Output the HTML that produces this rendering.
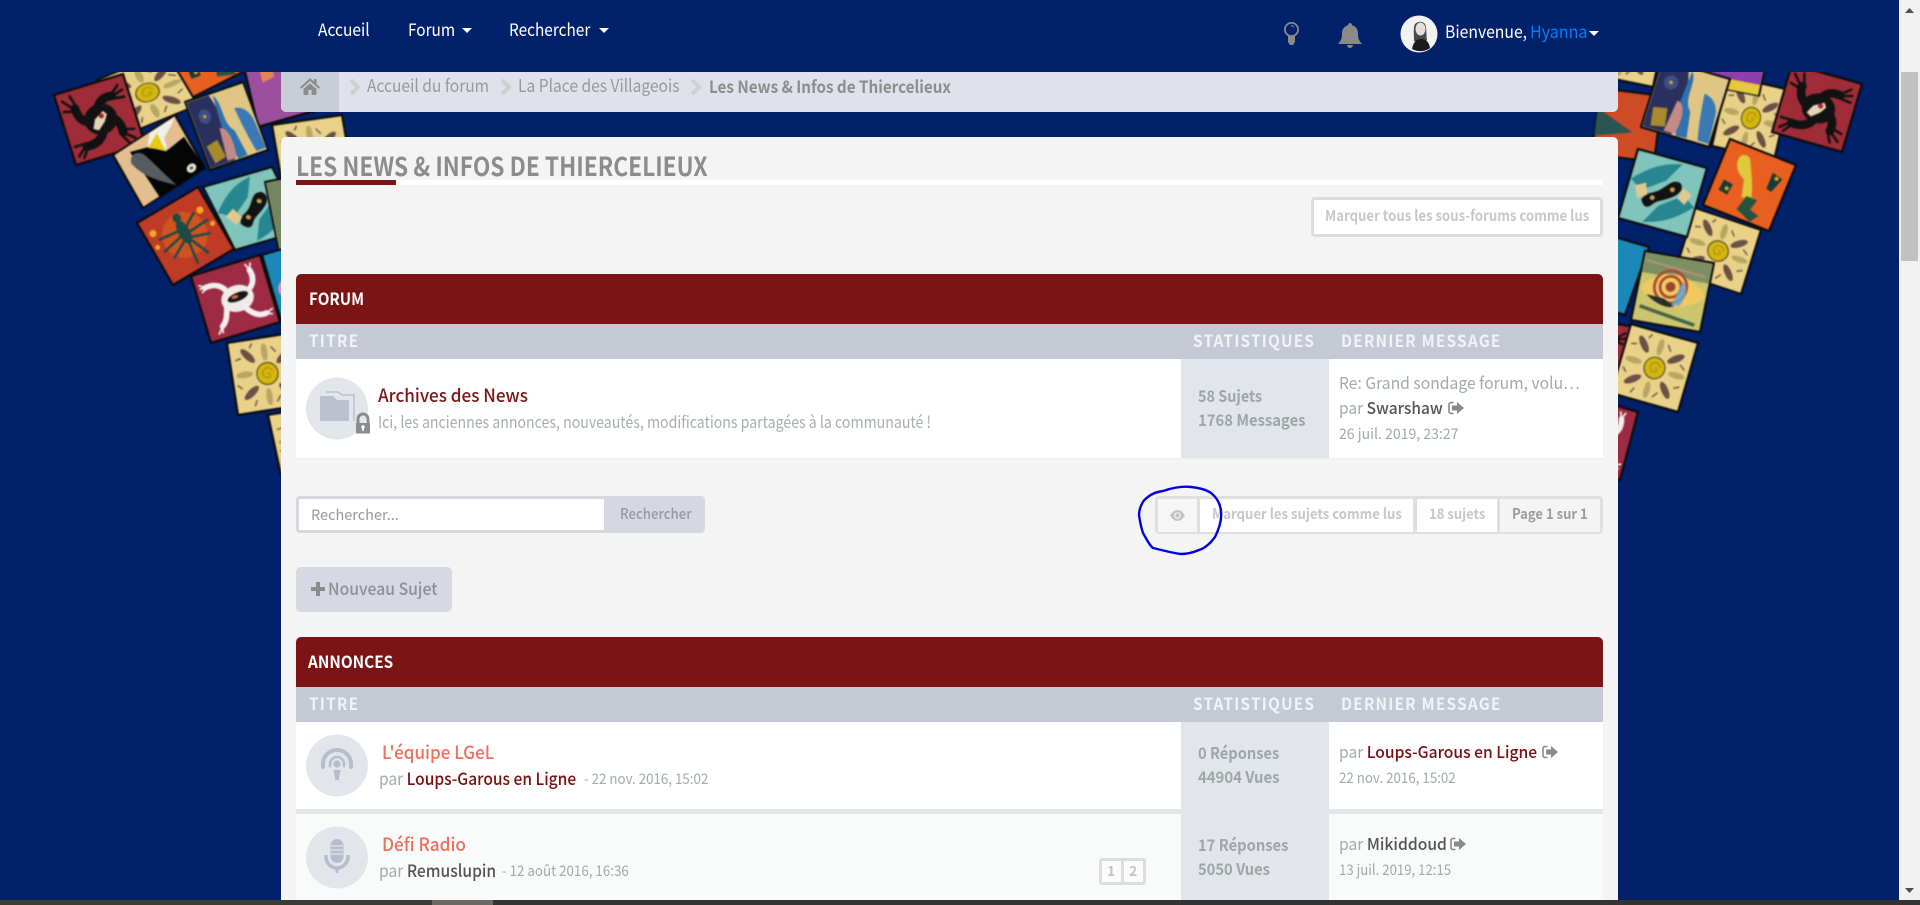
<!DOCTYPE html>
<html lang="fr"><head><meta charset="utf-8"><title>Les News &amp; Infos de Thiercelieux</title>
<style>
*{box-sizing:border-box}
html,body{margin:0;padding:0;width:1920px;height:905px;overflow:hidden;background:#01216b}
body{position:relative;font-family:"Noto Sans CJK JP","Liberation Sans",sans-serif;font-size:16px}
.b{position:absolute}
.t{position:absolute;white-space:nowrap;height:24px;line-height:24px;margin-top:-13px;transform-origin:0 50%}
.w{font-weight:700}
.hd{color:#f2f3f6;font-weight:700;font-size:16.5px;letter-spacing:1.25px;transform:scaleX(.935)}
.st{color:#9fa6a8;font-weight:700;font-size:16px;transform:scaleX(.92)}
.pa{color:#a3aaaa;font-size:16.5px}
.dt{color:#a3aaaa;font-size:14.5px}
.nv{font-size:17.3px;color:#fff;transform:scaleX(.89)}
.bc{font-size:17.5px;color:#9a9a9a;transform:scaleX(.89)}
svg.i{position:absolute;overflow:visible}
</style></head><body>

<svg class="b" style="left:0;top:0;filter:blur(.7px)" width="1899" height="905" viewBox="0 0 1899 905">
<defs>
<g id="wolf"><rect width="100" height="100" fill="#9f2c37" stroke="#0b0b0b" stroke-width="3"/>
<g fill="none" stroke="#111" stroke-linecap="round"><path d="M76 24C62 22 54 28 50 40" stroke-width="12"/><path d="M22 26C22 42 30 50 44 52" stroke-width="12"/><path d="M22 80C36 82 48 76 52 62" stroke-width="12"/><path d="M76 76C78 62 72 54 60 48" stroke-width="12"/><path d="M76 22L88 12M78 24L92 20M76 28L92 30M18 24L8 12M24 22L20 8M20 30L6 26M20 80L8 90M22 84L14 94M18 76L6 76M78 78L90 88M74 80L80 92M78 72L92 76" stroke-width="3.500"/></g>
<ellipse cx="52" cy="50" rx="23" ry="21" fill="#121212"/><path d="M38 60L44 48 58 40 62 46 56 55 45 64Z" fill="#e4d6b4"/><circle cx="54" cy="46" r="3.500" fill="#a8222e"/></g>
<g id="sun"><rect width="100" height="100" fill="#e9d188" stroke="#0b0b0b" stroke-width="3"/>
<g fill="#6a5147"><ellipse cx="26" cy="22" rx="13" ry="5" transform="rotate(50 26 22)"/><ellipse cx="76" cy="30" rx="13" ry="5" transform="rotate(-35 76 30)"/><ellipse cx="73" cy="76" rx="13" ry="5" transform="rotate(50 73 76)"/><ellipse cx="24" cy="73" rx="13" ry="5" transform="rotate(-35 24 73)"/></g>
<g fill="#b7a764"><ellipse cx="50" cy="20" rx="4.500" ry="12"/><ellipse cx="18" cy="47" rx="12" ry="4.500"/><ellipse cx="48" cy="82" rx="4.500" ry="12"/><ellipse cx="83" cy="52" rx="12" ry="4.500"/></g>
<g fill="none" stroke="#6a5147" stroke-width="2"><path d="M16 24L8 26M30 12L34 6M84 36L92 42M66 22L60 14M64 82L58 90M84 70L92 66M12 66L6 60M30 84L26 92"/></g>
<circle cx="50" cy="50" r="15" fill="#d4b60f" stroke="#4a4220" stroke-width="1.500"/><path d="M50 50a3 3 0 0 1 4 3a6 6 0 0 1-9 1a8 8 0 0 1 4-12a9 9 0 0 1 9 6" fill="none" stroke="#a58d10" stroke-width="1.500"/></g>
<g id="navy"><rect width="100" height="100" fill="#dfc684" stroke="#0b0b0b" stroke-width="3"/><path d="M2 2H40L50 40 44 98H2Z" fill="#2a305e"/><path d="M46 4C58 20 44 44 60 60L66 97 50 98 42 52Z" fill="#2e72ae"/><path d="M72 30C88 32 96 44 96 62L98 96H82C76 70 74 50 72 30Z" fill="#3a79b5"/><circle cx="22" cy="28" r="10" fill="#3e4d84"/><circle cx="22" cy="28" r="2.500" fill="#d9a830"/><path d="M38 50C50 50 54 70 48 96H32Z" fill="#c68a86"/><path d="M8 68L28 64 32 90 12 94Z" fill="#a98a2a"/></g>
<g id="teal"><rect width="100" height="100" fill="#80c4bb" stroke="#0b0b0b" stroke-width="3"/><path d="M2 42C24 20 38 10 66 4L50 32 20 54ZM98 58C76 80 62 90 34 96L50 68 80 46Z" fill="#27868f"/><path d="M24 66C30 52 36 56 46 46S58 28 70 30C78 36 74 46 62 54S46 62 40 70 28 74 24 66Z" fill="#121212"/><circle cx="38" cy="60" r="3.500" fill="#c79a45"/><circle cx="62" cy="42" r="3.500" fill="#c79a45"/><path d="M10 50L24 42 30 58 18 66ZM76 36L90 42 84 58 72 52Z" fill="#e2c88c"/></g>
<g id="crow"><rect width="100" height="100" fill="#e3bf90" stroke="#0b0b0b" stroke-width="3"/><path d="M22 11L46 20 65 42 96 38 100 100 27 100Z" fill="#050505"/><path d="M16 28C20 12 34 16 38 30 44 52 50 80 55 98 40 80 22 60 16 28Z" fill="#555c62"/><path d="M47 18L58 2H98L80 20 66 40 48 22Z" fill="#f0efe8"/><path d="M72 22L98 5 97 38 68 42Z" fill="#e3bf90"/><path d="M46 21.500L66.700 9 64.800 39.500Z" fill="#e7c917"/><circle cx="84" cy="88" r="7" fill="#e6e6d2"/><circle cx="84" cy="88" r="2.500" fill="#555"/></g>
<g id="human"><rect width="100" height="100" fill="#bf3b26" stroke="#0b0b0b" stroke-width="3"/><circle cx="50" cy="48" r="32" fill="#cf5422"/><g fill="#f7a620"><circle cx="12" cy="24" r="5"/><circle cx="86" cy="29" r="5"/><circle cx="92" cy="54" r="3.500"/><circle cx="8" cy="44" r="3.500"/></g><g fill="none" stroke="#1d4a43" stroke-width="3.500" stroke-linecap="round"><path d="M51 40L16 36M51 46L14 54M51 52L22 68M53 42L76 28M53 48L88 46M53 54L82 64M50 60L46 91M55 60L66 86"/></g><ellipse cx="51" cy="44" rx="8" ry="18" fill="#1d4a43"/><circle cx="52" cy="22" r="6" fill="#1d4a43"/></g>
<g id="white"><rect width="100" height="100" fill="#9e2a44" stroke="#0b0b0b" stroke-width="3"/><g fill="none" stroke="#f2efee" stroke-linecap="round"><path d="M14 22C28 20 38 26 42 38" stroke-width="8"/><path d="M22 82C32 76 34 60 38 48" stroke-width="8"/><path d="M80 16C84 30 78 40 68 44" stroke-width="8"/><path d="M86 82C74 84 66 76 60 66" stroke-width="8"/></g><ellipse cx="53" cy="50" rx="23" ry="19" fill="#f0ebe8"/><ellipse cx="54" cy="48" rx="15" ry="6" fill="#1b1414" transform="rotate(-6 54 48)"/><ellipse cx="50" cy="47" rx="5" ry="2.500" fill="#c7704e"/><g stroke="#f2efee" stroke-width="2.500"><path d="M14 22L6 16M14 22L6 22M14 24L8 28M22 82L14 92M22 82L20 92M80 16L76 6M80 16L84 6M86 82L96 78M86 82L94 86"/></g></g>
<g id="orange"><rect width="100" height="100" fill="#e95f20" stroke="#0b0b0b" stroke-width="3"/><path d="M22 18a9 9 0 0 1 17 2C48 36 56 52 60 68L46 70 40 46C28 40 20 32 22 18Z" fill="#dfc83a"/><path d="M52 66H68L64 82 78 86 70 98 46 88Z" fill="#24543c"/><path d="M74 22L90 26 82 48 74 46ZM14 56L28 58 26 74 12 72Z" fill="#173a38"/><circle cx="82" cy="28" r="3" fill="#e0a020"/><circle cx="22" cy="66" r="3" fill="#caa323"/></g>
<g id="eye"><rect width="100" height="100" fill="#cbc66e" stroke="#0b0b0b" stroke-width="3"/><rect x="2" y="2" width="96" height="28" fill="#7c8e64"/><path d="M4 12L92 22" stroke="#ae9672" stroke-width="3"/><path d="M4 52C24 18 70 16 98 50 74 76 30 82 4 52Z" fill="#f0c95e"/><circle cx="46" cy="44" r="23" fill="none" stroke="#a84a35" stroke-width="4"/><circle cx="46" cy="44" r="15" fill="none" stroke="#a84a35" stroke-width="4"/><circle cx="46" cy="44" r="7" fill="#9a4434"/><path d="M14 60C30 72 50 76 56 70L40 62Z" fill="#26302a"/><path d="M62 34C70 38 72 54 64 68L52 70Z" fill="#70a3cf" opacity=".85"/><path d="M8 78L90 92" stroke="#46644b" stroke-width="5"/></g>
<g id="purple"><rect width="100" height="100" fill="#9b4f9e" stroke="#0b0b0b" stroke-width="3"/><path d="M20 14h14l4 30 -18 4z" fill="#e4874f"/><path d="M56 6C86 0 96 30 90 60 86 46 72 18 56 6Z" fill="#f0d678"/><path d="M60 30h30v30h-26z" fill="#e8c868"/></g>
<g id="yel"><rect width="100" height="100" fill="#e7c83f" stroke="#0b0b0b" stroke-width="3"/><rect x="2" y="2" width="96" height="70" fill="#8d3fb0"/></g>
<g id="redo"><rect width="100" height="100" fill="#ce4b25" stroke="#0b0b0b" stroke-width="3"/><path d="M0 30L60 60 0 72Z" fill="#2a5550"/></g>
<g id="sky"><rect width="100" height="100" fill="#1c88ba" stroke="#0b0b0b" stroke-width="3"/><circle cx="22" cy="58" r="14" fill="#e493b8"/></g>
<g id="ol"><rect width="100" height="100" fill="#ded29a" stroke="#0b0b0b" stroke-width="3"/><rect x="2" y="2" width="30" height="96" fill="#738561"/></g>
</defs>
<!-- left -->
<use href="#sun" transform="matrix(.73 -.30 .28 .55 97 80)"/>
<use href="#orange" transform="matrix(.61 -.31 .31 .52 162 45)"/>
<use href="#purple" transform="matrix(.70 -.20 .18 .77 240 50)"/>
<use href="#sun" transform="matrix(.70 -.10 .12 .70 272 125)"/>
<use href="#navy" transform="matrix(.58 -.20 .25 .68 185 102)"/>
<use href="#wolf" transform="matrix(.69 -.21 .22 .70 54 95)"/>
<use href="#crow" transform="matrix(.62 -.40 .30 .53 113 155)"/>
<use href="#teal" transform="matrix(.69 -.20 .32 .63 203 187)"/>
<use href="#ol" transform="matrix(.60 -.12 .14 .70 265 182)"/>
<use href="#human" transform="matrix(.61 -.36 .36 .62 137 223)"/>
<use href="#sky" transform="matrix(.68 -.20 .19 .65 262 255)"/>
<use href="#white" transform="matrix(.69 -.21 .20 .67 191 276)"/>
<use href="#sun" transform="matrix(.70 -.11 .11 .72 227 343)"/>
<use href="#sun" transform="matrix(.70 -.11 .13 .60 268 415)"/>
<!-- right -->
<use href="#sun" transform="matrix(.68 .14 -.14 .68 1599 5)"/>
<use href="#sun" transform="matrix(.62 .14 -.16 .70 1728 76)"/>
<use href="#yel" transform="matrix(.62 .12 -.08 .39 1705 45)"/>
<use href="#wolf" transform="matrix(.70 .20 -.20 .68 1792 64)"/>
<use href="#redo" transform="matrix(.62 .08 -.08 .66 1600 88)"/>
<use href="#navy" transform="matrix(.68 .20 -.21 .68 1662 59)"/>
<use href="#sun" transform="matrix(.66 .22 -.20 .64 1695 208)"/>
<use href="#teal" transform="matrix(.69 .19 -.20 .69 1638 149)"/>
<use href="#orange" transform="matrix(.66 .26 -.27 .66 1730 139)"/>
<use href="#sky" transform="matrix(.68 .20 -.24 .68 1581 227)"/>
<use href="#eye" transform="matrix(.69 .12 -.14 .69 1645 251)"/>
<use href="#wolf" transform="matrix(.62 .10 -.17 .62 1573 317)"/>
<use href="#sun" transform="matrix(.67 .19 -.20 .69 1631 324)"/>
<use href="#white" transform="matrix(.68 .20 -.18 .68 1570 392)"/>
</svg>

<!-- header -->
<div class="b" style="left:0;top:0;width:1899px;height:72px;background:#01216b"></div>
<div class="t nv" style="left:318px;top:30px;transform:scaleX(.9)">Accueil</div>
<div class="t nv" style="left:408px;top:30px">Forum</div>
<svg class="i" style="left:462px;top:28px" width="10" height="5"><path d="M0 0H10L5 5Z" fill="#fff"/></svg>
<div class="t nv" style="left:509px;top:30px">Rechercher</div>
<svg class="i" style="left:599px;top:28px" width="10" height="5"><path d="M0 0H10L5 5Z" fill="#fff"/></svg>
<svg class="i" style="left:1283px;top:22px" width="17" height="23" viewBox="0 0 17 23"><circle cx="8.500" cy="7.500" r="6.600" fill="none" stroke="#8a8a8a" stroke-width="1.800"/><path d="M5 14H12V20L10 23H7L5 20Z" fill="#8a8a8a"/><path d="M8 3.500a3.500 3.500 0 0 1 3 2" fill="none" stroke="#8a8a8a"/></svg>
<svg class="i" style="left:1338px;top:23px" width="24" height="25" viewBox="0 0 24 25"><path d="M12 0c1.200 0 2 .8 2 2.200 4 1 6 4.400 6 8 0 5.800 1.500 8 4 10.800H0c2.500-2.800 4-5 4-10.800 0-3.600 2-7 6-8C10 .8 10.800 0 12 0ZM9 22h6a3 3 0 0 1-6 0Z" fill="#8a8a8a"/></svg>
<svg class="i" style="left:1400px;top:15px" width="38" height="38" viewBox="0 0 38 38"><circle cx="19" cy="19" r="18.500" fill="#f2f2f2"/><path d="M14 26C14 20 13 13 15 9c3-3 8-3 10 0 2 4 1 10 2 16l-3 2H16Z" fill="#4a4a4a"/><ellipse cx="20.500" cy="14" rx="5" ry="6.500" fill="#e4dfd8"/><path d="M12 34C13 28 16 24 21 24s8 3 9 9C25 37 17 37 12 34Z" fill="#1c1c1c"/></svg>
<div class="t nv" style="left:1445px;top:32px;transform:scaleX(.91)">Bienvenue,</div>
<div class="t nv" style="left:1530px;top:32px;color:#0a7cf5;transform:scaleX(.93)">Hyanna</div>
<svg class="i" style="left:1589px;top:31px" width="10" height="5"><path d="M0 0H10L5 5Z" fill="#fff"/></svg>

<!-- breadcrumb -->
<div class="b" style="left:281px;top:72px;width:1337px;height:40px;background:#dfe2ea;border-radius:0 0 5px 5px;overflow:hidden"><div class="b" style="left:0;top:0;width:58px;height:40px;background:#c9cdd5"></div></div>
<svg class="i" style="left:300px;top:78px" width="20" height="17" viewBox="0 0 20 17"><path d="M10 0L14 3.500V1H16.500V6L20 9.500 18.700 10.800 10 3 1.300 10.800 0 9.500ZM3.500 11L10 5.200 16.500 11V17H11.700V12H8.300V17H3.500Z" fill="#8c8c8c"/></svg>
<svg class="i" style="left:349px;top:78px" width="12" height="18"><path d="M2 2L9 9 2 16" fill="none" stroke="#cfcfcf" stroke-width="4"/></svg>
<div class="t bc" style="left:367px;top:87px">Accueil du forum</div>
<svg class="i" style="left:500px;top:78px" width="12" height="18"><path d="M2 2L9 9 2 16" fill="none" stroke="#cfcfcf" stroke-width="4"/></svg>
<div class="t bc" style="left:518px;top:87px">La Place des Villageois</div>
<svg class="i" style="left:690px;top:78px" width="12" height="18"><path d="M2 2L9 9 2 16" fill="none" stroke="#cfcfcf" stroke-width="4"/></svg>
<div class="t w" style="left:709px;top:87px;font-size:17px;color:#8d8d8d;transform:scaleX(.894)">Les News &amp; Infos de Thiercelieux</div>

<!-- main card -->
<div class="b" style="left:281px;top:137px;width:1337px;height:763px;background:#f4f4f4;border-radius:5px 5px 0 0"></div>
<div class="t w" style="left:296px;top:167px;font-size:26px;color:#8c8c8c;transform:scaleX(.873)">LES NEWS &amp; INFOS DE THIERCELIEUX</div>
<div class="b" style="left:296px;top:180px;width:1307px;height:5px;background:#fff"></div>
<div class="b" style="left:296px;top:180px;width:100px;height:5px;background:#7b1414"></div>
<div class="b" style="left:1311px;top:197px;width:292px;height:40px;background:#fff;border:3px solid #dcdcdc;border-radius:4px"></div>
<div class="t w" style="left:1325px;top:217px;font-size:15px;color:#c8c8cc;transform:scaleX(.877)">Marquer tous les sous-forums comme lus</div>

<!-- forum block -->
<div class="b" style="left:296px;top:274px;width:1307px;height:50px;background:#7b1414;border-radius:5px 5px 0 0"></div>
<div class="t w" style="left:308.500px;top:299px;font-size:16.500px;color:#fff;transform:scaleX(.92)">FORUM</div>
<div class="b" style="left:296px;top:324px;width:1307px;height:35px;background:#c5c9d4"></div>
<div class="t hd" style="left:309px;top:341px">TITRE</div>
<div class="t hd" style="left:1193px;top:341px">STATISTIQUES</div>
<div class="t hd" style="left:1341px;top:341px">DERNIER MESSAGE</div>
<div class="b" style="left:296px;top:359px;width:1307px;height:100px;background:#fff;border-bottom:1px solid #eceef0"></div>
<div class="b" style="left:1181px;top:359px;width:148px;height:99px;background:#e2e6ea"></div>
<svg class="i" style="left:306px;top:377px" width="68" height="64" viewBox="0 0 68 64"><circle cx="31" cy="31.500" r="31" fill="#e2e6ea"/><path d="M20 15H32L36 18H48V44" fill="none" stroke="#bbc0cf" stroke-width="1.500"/><path d="M14 19H27L31 23H43V44H14Z" fill="#bbc0cf"/><path d="M52 46V42a5 5 0 0 1 10 0v4" fill="none" stroke="#8c8c8c" stroke-width="3"/><path d="M50 46H64V56.500H50Z" fill="#8c8c8c"/><circle cx="57" cy="50" r="1.700" fill="#fff"/><rect x="56.200" y="50" width="1.600" height="4" fill="#fff"/></svg>
<div class="t" style="left:378px;top:396px;font-size:18px;font-weight:500;color:#7b1414;transform:scaleX(.95)">Archives des News</div>
<div class="t" style="left:378px;top:421.500px;font-size:16.200px;color:#a7aeae;transform:scaleX(.873)">Ici, les anciennes annonces, nouveautés, modifications partagées à la communauté !</div>
<div class="t st" style="left:1198px;top:396px;transform:scaleX(.9)">58 Sujets</div>
<div class="t st" style="left:1198px;top:420px;transform:scaleX(.926)">1768 Messages</div>
<div class="t pa" style="left:1339px;top:383px;transform:scaleX(.95)">Re: Grand sondage forum, volu…</div>
<div class="t pa" style="left:1339px;top:408px;transform:scaleX(.94)">par <span style="color:#555;font-weight:500">Swarshaw</span></div>
<svg class="i" style="left:1448px;top:401px" width="16" height="14" viewBox="0 0 16 14"><path d="M5.500 1.500H3a2 2 0 0 0-2 2v7a2 2 0 0 0 2 2h2.500" fill="none" stroke="#8a8a8a" stroke-width="1.600"/><path d="M4 4.500H9V1L16 7 9 13V9.500H4Z" fill="#8a8a8a"/></svg>
<div class="t dt" style="left:1339px;top:435px;transform:scaleX(.97)">26 juil. 2019, 23:27</div>

<!-- search -->
<div class="b" style="left:296px;top:496px;width:409px;height:37px;background:#d5d8e0;border-radius:4px"></div>
<div class="b" style="left:299px;top:499px;width:305px;height:31px;background:#fff"></div>
<div class="t" style="left:311px;top:516px;font-size:14.500px;color:#999">Rechercher...</div>
<div class="t" style="left:620px;top:515px;font-size:14.500px;font-weight:500;color:#999;transform:scaleX(.91)">Rechercher</div>

<!-- tools bar -->
<div class="b" style="left:1155px;top:496px;width:448px;height:38px;background:#dfdfdf;border-radius:4px"></div>
<div class="b" style="left:1158px;top:499px;width:39px;height:33px;background:#f6f6f6"></div>
<div class="b" style="left:1200px;top:499px;width:213px;height:33px;background:#fff"></div>
<div class="b" style="left:1417px;top:499px;width:80px;height:33px;background:#fff"></div>
<div class="b" style="left:1500px;top:499px;width:100px;height:33px;background:#f4f4f4"></div>
<svg class="i" style="left:1170px;top:510px" width="15" height="11" viewBox="0 0 15 11"><path d="M0 5.500C2.500 1.500 5 0 7.500 0S12.500 1.500 15 5.500C12.500 9.500 10 11 7.500 11S2.500 9.500 0 5.500Z" fill="#c4c4c4"/><circle cx="7.500" cy="5.500" r="3.300" fill="#f6f6f6"/><circle cx="7.500" cy="5.500" r="2.200" fill="#c4c4c4"/></svg>
<div class="t w" style="left:1212px;top:515px;font-size:14.500px;color:#c8c8cb;transform:scaleX(.906)">Marquer les sujets comme lus</div>
<div class="t w" style="left:1429px;top:515px;font-size:14.500px;color:#c8c8cb;transform:scaleX(.9)">18 sujets</div>
<div class="t w" style="left:1512px;top:515px;font-size:14.500px;color:#9d9d9d;transform:scaleX(.9)">Page 1 sur 1</div>
<svg class="i" style="left:1136px;top:484px" width="90" height="74" viewBox="1136 484 90 74"><path d="M1143.500 501C1150 494 1156 492 1163 491 1172 488 1182 486 1191 487 1200 488 1207 490 1211 493 1217 498 1220 503 1221 511 1222 520 1219 529 1215 537L1211 542C1206 547 1203 549 1199 550 1192 553 1186 554 1181 554 1172 553 1162 550 1153 548 1149 545 1146 538 1143 533 1141 527 1140 522 1139 515 1139 509 1141 505 1143.500 501Z" fill="none" stroke="#0000e1" stroke-width="2.400"/></svg>

<!-- new topic -->
<div class="b" style="left:296px;top:567px;width:156px;height:45px;background:#d6d9e1;border-radius:5px"></div>
<svg class="i" style="left:311px;top:582px" width="14" height="14"><path d="M5 0H9V5H14V9H9V14H5V9H0V5H5Z" fill="#8c8d90"/></svg>
<div class="t" style="left:328px;top:589px;font-size:17px;font-weight:500;color:#8f9092;transform:scaleX(.927)">Nouveau Sujet</div>

<!-- annonces -->
<div class="b" style="left:296px;top:637px;width:1307px;height:50px;background:#7b1414;border-radius:5px 5px 0 0"></div>
<div class="t w" style="left:308px;top:662px;font-size:16.500px;color:#fff;transform:scaleX(.93)">ANNONCES</div>
<div class="b" style="left:296px;top:687px;width:1307px;height:35px;background:#c5c9d4"></div>
<div class="t hd" style="left:309px;top:704px">TITRE</div>
<div class="t hd" style="left:1193px;top:704px">STATISTIQUES</div>
<div class="t hd" style="left:1341px;top:704px">DERNIER MESSAGE</div>
<div class="b" style="left:296px;top:722px;width:1307px;height:87px;background:#fff"></div>
<div class="b" style="left:296px;top:809px;width:1307px;height:5px;background:#e2e6ea"></div>
<div class="b" style="left:296px;top:814px;width:1307px;height:86px;background:#f9fafa"></div>
<div class="b" style="left:1181px;top:722px;width:148px;height:178px;background:#e2e6ea"></div>
<svg class="i" style="left:306px;top:734px" width="62" height="64" viewBox="0 0 62 64"><circle cx="31" cy="31.500" r="31" fill="#e2e6ea"/><g fill="none" stroke="#b8bdcc" stroke-linecap="round"><path d="M17 33V30a14 14 0 0 1 28 0V33" stroke-width="4"/><path d="M24 32V30a7 7 0 0 1 14 0V32" stroke-width="2.600"/></g><circle cx="31" cy="30" r="3.600" fill="#b8bdcc"/><path d="M27.500 36H34.500L32.800 46H29.200Z" fill="#b8bdcc"/></svg>
<svg class="i" style="left:306px;top:826px" width="62" height="64" viewBox="0 0 62 64"><circle cx="31" cy="31.500" r="31" fill="#e2e6ea"/><rect x="24.500" y="13" width="13" height="24" rx="6.500" fill="#b8bdcc"/><path d="M25 20H37M25 24H37M25 28H37" stroke="#e2e6ea" stroke-width="1.200"/><path d="M20 29V31a11 11 0 0 0 22 0V29" fill="none" stroke="#b8bdcc" stroke-width="3.600"/><rect x="29.500" y="41" width="3" height="6" fill="#b8bdcc"/></svg>
<div class="t" style="left:382px;top:753px;font-size:18px;font-weight:500;color:#ef6e5c;transform:scaleX(.947)">L'équipe LGeL</div>
<div class="t pa" style="left:379px;top:779px;font-size:17px;transform:scaleX(.915)">par <span style="color:#7a0f0f;font-weight:500">Loups-Garous en Ligne</span></div>
<div class="t dt" style="left:584px;top:780px;transform:scaleX(.92)">- 22 nov. 2016, 15:02</div>
<div class="t st" style="left:1198px;top:753px;transform:scaleX(.915)">0 Réponses</div>
<div class="t st" style="left:1198px;top:777px;transform:scaleX(.93)">44904 Vues</div>
<div class="t pa" style="left:1339px;top:752px;transform:scaleX(.947)">par <span style="color:#7a0f0f;font-weight:500">Loups-Garous en Ligne</span></div>
<svg class="i" style="left:1542px;top:745px" width="16" height="14" viewBox="0 0 16 14"><path d="M5.500 1.500H3a2 2 0 0 0-2 2v7a2 2 0 0 0 2 2h2.500" fill="none" stroke="#8a8a8a" stroke-width="1.600"/><path d="M4 4.500H9V1L16 7 9 13V9.500H4Z" fill="#8a8a8a"/></svg>
<div class="t dt" style="left:1339px;top:779px;transform:scaleX(.92)">22 nov. 2016, 15:02</div>

<div class="t" style="left:382px;top:845px;font-size:18px;font-weight:500;color:#ef6e5c;transform:scaleX(.957)">Défi Radio</div>
<div class="t pa" style="left:379px;top:871px;font-size:17px;transform:scaleX(.92)">par <span style="color:#555;font-weight:500">Remuslupin</span></div>
<div class="t dt" style="left:502px;top:872px;transform:scaleX(.92)">- 12 août 2016, 16:36</div>
<div class="b" style="left:1099px;top:858px;width:47px;height:27px;background:#ddd;border-radius:3px"></div>
<div class="b" style="left:1102px;top:861px;width:19px;height:21px;background:#fbfbfb"></div>
<div class="b" style="left:1124px;top:861px;width:19px;height:21px;background:#fbfbfb"></div>
<div class="t" style="left:1107px;top:872px;font-size:14px;font-weight:700;color:#c4c4c4">1</div>
<div class="t" style="left:1129px;top:872px;font-size:14px;font-weight:700;color:#c4c4c4">2</div>
<div class="t st" style="left:1198px;top:845px">17 Réponses</div>
<div class="t st" style="left:1198px;top:869px">5050 Vues</div>
<div class="t pa" style="left:1339px;top:844px;transform:scaleX(.95)">par <span style="color:#555;font-weight:500">Mikiddoud</span></div>
<svg class="i" style="left:1450px;top:837px" width="16" height="14" viewBox="0 0 16 14"><path d="M5.500 1.500H3a2 2 0 0 0-2 2v7a2 2 0 0 0 2 2h2.500" fill="none" stroke="#8a8a8a" stroke-width="1.600"/><path d="M4 4.500H9V1L16 7 9 13V9.500H4Z" fill="#8a8a8a"/></svg>
<div class="t dt" style="left:1339px;top:871px;transform:scaleX(.91)">13 juil. 2019, 12:15</div>

<!-- scrollbar -->
<div class="b" style="left:1899px;top:0;width:21px;height:900px;background:#f1f1f1"></div>
<div class="b" style="left:1901px;top:72px;width:17px;height:189px;background:#c1c1c1"></div>
<svg class="i" style="left:1905px;top:8px" width="9" height="5"><path d="M4.500 0L9 5H0Z" fill="#505050"/></svg>
<svg class="i" style="left:1905px;top:888px" width="9" height="5"><path d="M0 0H9L4.500 5Z" fill="#505050"/></svg>

<!-- bottom strip -->
<div class="b" style="left:0;top:900px;width:1920px;height:5px;background:#333"></div>
<div class="b" style="left:0;top:900px;width:432px;height:5px;background:#3a3c33"></div>
<div class="b" style="left:432px;top:900px;width:61px;height:5px;background:#6a6a60"></div>
</body></html>
